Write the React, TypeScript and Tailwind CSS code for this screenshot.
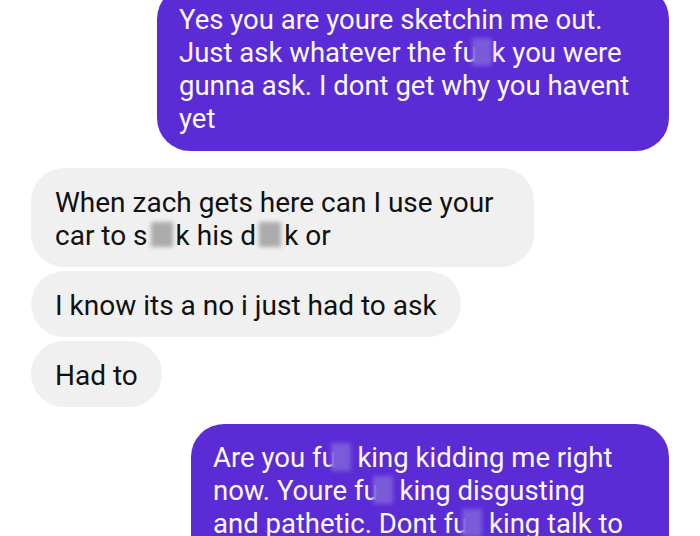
import React from 'react';

// blurred-out part of a word, as in the screenshot
const Censor: React.FC<{ tone: 'purple' | 'gray'; width: string }> = ({ tone, width }) => (
  <span className={`relative inline-block ${width} h-[0.6em]`}>
    <span
      className={
        tone === 'purple'
          ? 'absolute -left-[6px] right-0 -top-[8px] bottom-[-4px] bg-[#7a5bd9] blur-[2px]'
          : 'absolute left-[3px] right-[3px] -top-[6px] bottom-[-2px] bg-[#ababab] blur-[2px]'
      }
    />
  </span>
);

const Outgoing: React.FC<{ width: string; children: React.ReactNode }> = ({ width, children }) => (
  <div className={`self-end ${width} rounded-[33px] bg-[#5b2bd6] pl-[22px] pr-4 pt-[17px] pb-4 text-[27.5px] text-[#fbf8ff] whitespace-nowrap`}>
    {children}
  </div>
);

const Incoming: React.FC<{ width?: string; children: React.ReactNode }> = ({ width, children }) => (
  <div className={`self-start ${width ?? ''} rounded-[33px] bg-[#f0f0f0] px-6 pt-[18px] pb-[15px] text-[28px] text-[#111111] whitespace-nowrap`}>
    {children}
  </div>
);

export default function App() {
  return (
    <div className="w-[700px] h-[536px] overflow-hidden bg-white px-[31px] font-['Roboto',sans-serif] leading-[33px]">
      <div className="-mt-[14px] flex flex-col">
        <Outgoing width="w-[512px]">
          Yes you are youre sketchin me out.
          <br />
          Just ask whatever the fu<Censor tone="purple" width="w-[14px]" />k you were
          <br />
          gunna ask. I dont get why you havent
          <br />
          yet
        </Outgoing>

        <div className="mt-[17px] flex flex-col gap-1">
          <Incoming width="w-[503px]">
            When zach gets here can I use your
            <br />
            car to s<Censor tone="gray" width="w-[28px]" />k his d<Censor tone="gray" width="w-[28px]" />k or
          </Incoming>
          <Incoming>I know its a no i just had to ask</Incoming>
          <Incoming>Had to</Incoming>
        </div>

        <div className="mt-[17px] flex flex-col">
          <Outgoing width="w-[478px]">
            Are you fu<Censor tone="purple" width="w-[14px]" /> king kidding me right
            <br />
            now. Youre fu<Censor tone="purple" width="w-[14px]" /> king disgusting
            <br />
            and pathetic. Dont fu<Censor tone="purple" width="w-[14px]" /> king talk to
            <br />
            me
          </Outgoing>
        </div>
      </div>
    </div>
  );
}
